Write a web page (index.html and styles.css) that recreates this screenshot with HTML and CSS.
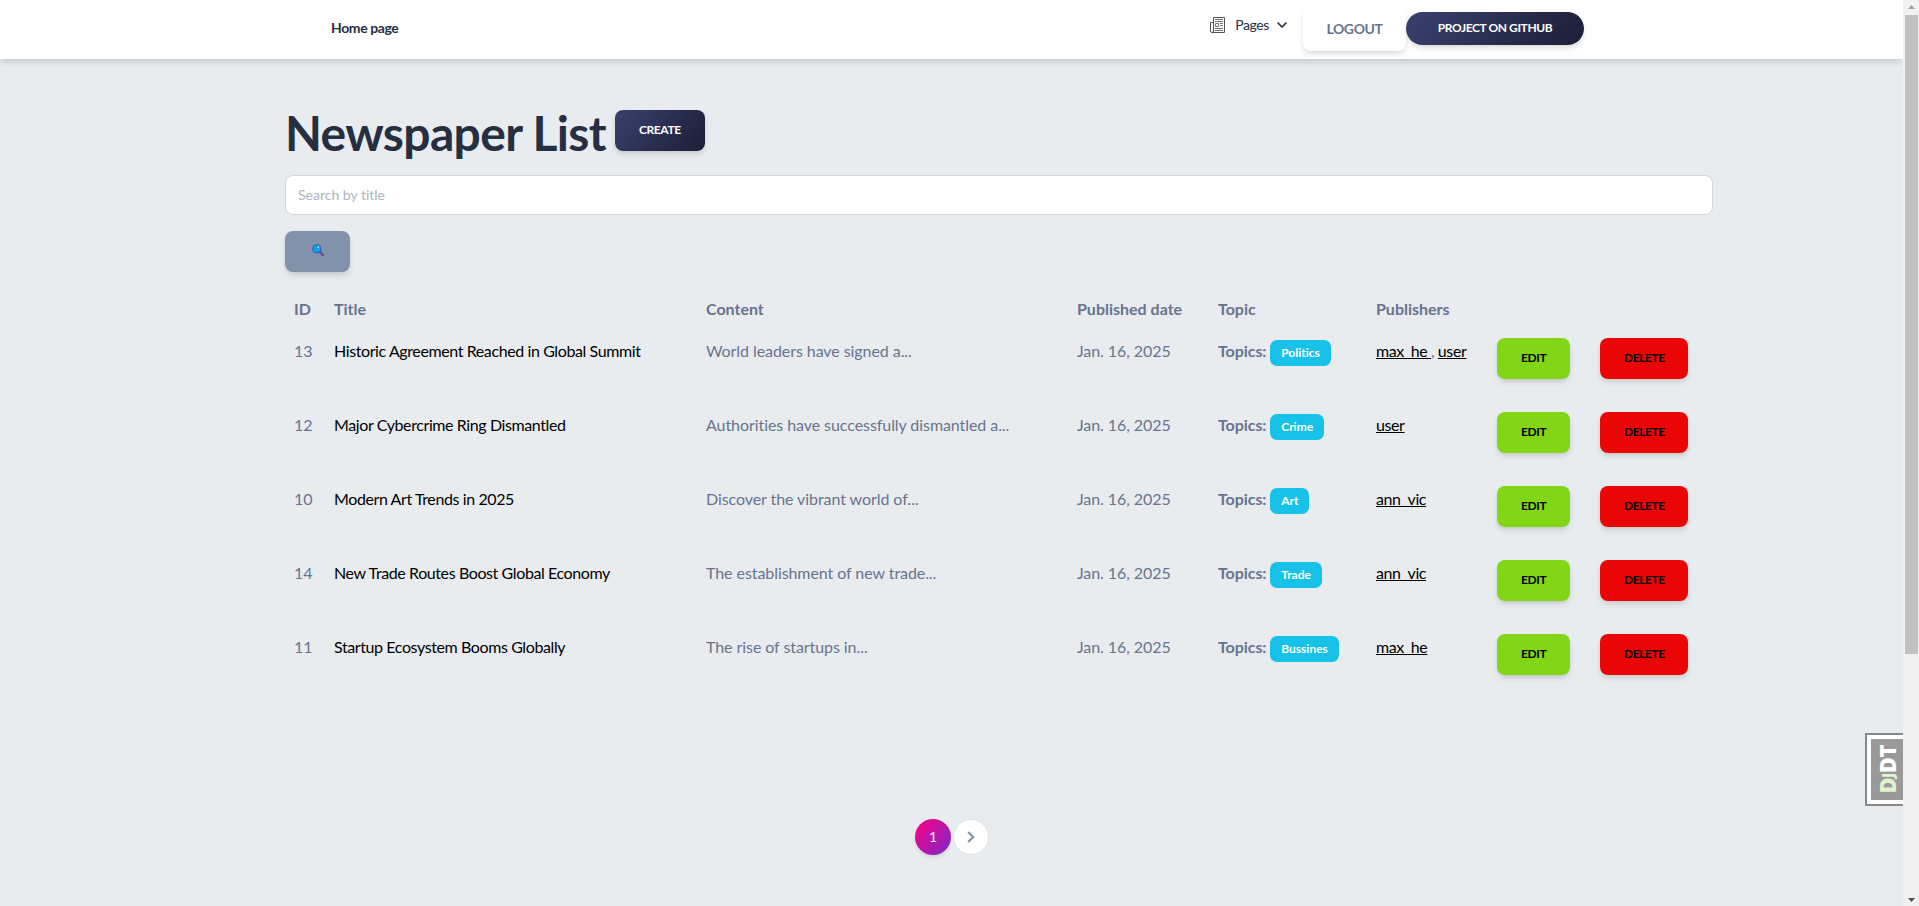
FILE: index.html
```html
<!DOCTYPE html>
<html lang="en">
<head>
<meta charset="utf-8">
<title>Newspaper List</title>
<link rel="stylesheet" href="styles.css">
</head>
<body>
<div class="page">
  <nav class="navbar">
    <a class="brand">Home page</a>
    <div class="nav-right">
      <a class="pages">
        <svg class="news-icon" width="16" height="18" viewBox="0 0 16 18" fill="none" stroke="#555" stroke-width="1"><path d="M3.500 1.500h11v15h-12.500a1.500 1.500 0 0 1-1.500-1.500v-8.500h3M3.500 1.500v13.500a1.500 1.500 0 0 1-1.500 1.500"/><path d="M5 3.500h8M5 5.500h8M5.500 7.500h3v3h-3zM10 7.500h3M10 9.500h3M5 12.500h8M5 14.500h8" stroke="#777"/></svg>
        <span>Pages</span>
        <svg class="chevron" width="10" height="6" viewBox="0 0 10 6" fill="none" stroke="#252f40" stroke-width="1.700" stroke-linecap="round" stroke-linejoin="round"><path d="M1 1l4 4 4-4"/></svg>
      </a>
      <a class="logout">LOGOUT</a>
      <a class="btn btn-dark btn-round">PROJECT ON GITHUB</a>
    </div>
  </nav>
  <main class="content">
    <h1>Newspaper List <a class="btn btn-dark">CREATE</a></h1>
    <input class="search" type="text" placeholder="Search by title">
    <button class="btn btn-search" aria-label="Search"><svg width="12" height="12" viewBox="0 0 12 12"><path d="M8 8l3 3" stroke="#6a4fa0" stroke-width="2.600" stroke-linecap="round"/><circle cx="4.800" cy="4.800" r="4.100" fill="#00a6f4" stroke="#3560a8" stroke-width="1.100"/><circle cx="6.300" cy="3.100" r=".8" fill="#d5f2ff"/></svg></button>
    <table class="table">
      <colgroup><col class="c-id"><col class="c-title"><col class="c-content"><col class="c-date"><col class="c-topic"><col class="c-pub"><col class="c-edit"><col></colgroup>
      <thead><tr><th>ID</th><th>Title</th><th>Content</th><th>Published date</th><th>Topic</th><th>Publishers</th><th></th><th></th></tr></thead>
      <tbody>
        <tr><td>13</td><td><a>Historic Agreement Reached in Global Summit</a></td><td>World leaders have signed a...</td><td>Jan. 16, 2025</td><td><b>Topics:</b> <span class="badge">Politics</span></td><td><a class="user">max_he </a>, <a class="user">user</a></td><td><a class="btn btn-edit">EDIT</a></td><td><a class="btn btn-delete">DELETE</a></td></tr>
        <tr><td>12</td><td><a>Major Cybercrime Ring Dismantled</a></td><td>Authorities have successfully dismantled a...</td><td>Jan. 16, 2025</td><td><b>Topics:</b> <span class="badge">Crime</span></td><td><a class="user">user</a></td><td><a class="btn btn-edit">EDIT</a></td><td><a class="btn btn-delete">DELETE</a></td></tr>
        <tr><td>10</td><td><a>Modern Art Trends in 2025</a></td><td>Discover the vibrant world of...</td><td>Jan. 16, 2025</td><td><b>Topics:</b> <span class="badge">Art</span></td><td><a class="user">ann_vic</a></td><td><a class="btn btn-edit">EDIT</a></td><td><a class="btn btn-delete">DELETE</a></td></tr>
        <tr><td>14</td><td><a>New Trade Routes Boost Global Economy</a></td><td>The establishment of new trade...</td><td>Jan. 16, 2025</td><td><b>Topics:</b> <span class="badge">Trade</span></td><td><a class="user">ann_vic</a></td><td><a class="btn btn-edit">EDIT</a></td><td><a class="btn btn-delete">DELETE</a></td></tr>
        <tr><td>11</td><td><a>Startup Ecosystem Booms Globally</a></td><td>The rise of startups in...</td><td>Jan. 16, 2025</td><td><b>Topics:</b> <span class="badge">Bussines</span></td><td><a class="user">max_he</a></td><td><a class="btn btn-edit">EDIT</a></td><td><a class="btn btn-delete">DELETE</a></td></tr>
      </tbody>
    </table>
  </main>
  <div class="pagination">
    <a class="page-link active">1</a>
    <a class="page-link next"><svg width="8" height="12" viewBox="0 0 8 12" fill="none" stroke="#8392ab" stroke-width="2.200"><path d="M1.200 1l5 5-5 5"/></svg></a>
  </div>
  <div class="toolbar-handle"><div class="handle-face"><span class="handle-text"><i>D<small>J</small></i>DT</span></div></div>
</div>
<div class="scrollbar">
  <svg width="16" height="15" viewBox="0 0 16 15"><path d="M5 9h7L8.500 5z" fill="#a3a3a3"/></svg>
  <div class="thumb"></div>
  <svg class="down" width="16" height="17" viewBox="0 0 16 17"><path d="M5 9h7l-3.500 4z" fill="#505050"/></svg>
</div>
</body>
</html>
```
FILE: styles.css
```css
* { box-sizing: border-box; }
body {
  margin: 0;
  display: flex;
  height: 906px;
  overflow: hidden;
  background: #e8ecef;
  color: #67748e;
  font: 400 16px/1.6 Lato, sans-serif;
  font-variant-ligatures: none;
}
.page { position: relative; width: 1903px; height: 906px; overflow: hidden; }
.navbar {
  display: flex;
  justify-content: space-between;
  height: 59px;
  padding: 0 319px 0 331px;
  background: #fff;
  box-shadow: 0 4px 6px -1px rgba(20,20,20,.1), 0 2px 10px -1px rgba(20,20,20,.08);
}
.brand {
  padding-top: 17px;
  color: #252f40;
  font-size: 14px;
  font-weight: 700;
  letter-spacing: -.4px;
}
.nav-right { display: flex; align-items: flex-start; }
.pages {
  display: flex;
  align-items: center;
  margin: 14px 16px 0 0;
  color: #252f40;
  font-size: 14px;
  letter-spacing: -.4px;
}
.news-icon { margin-right: 9px; }
.chevron { margin-left: 8px; }
.logout {
  width: 103px;
  height: 45px;
  margin-top: 6px;
  border-radius: 8px;
  box-shadow: 0 4px 7px -1px rgba(0,0,0,.11), 0 2px 4px -1px rgba(0,0,0,.07);
  font-size: 14px;
  font-weight: 700;
  letter-spacing: -.4px;
  line-height: 45px;
  text-align: center;
}
.btn {
  display: inline-block;
  padding: 11px 24px 13px;
  border: 0;
  border-radius: 8px;
  box-shadow: 0 4px 7px -1px rgba(0,0,0,.11), 0 2px 4px -1px rgba(0,0,0,.07);
  font: 700 12px/17px Lato, sans-serif;
  letter-spacing: -.4px;
  text-align: center;
}
.btn-dark { color: #fff; background: linear-gradient(310deg, #1b1e35, #3a416f); }
.btn-round { width: 178px; margin-top: 12px; padding: 7px 0 9px; border-radius: 30px; }
.content { padding: 44px 190px 0 285px; }
h1 {
  display: flex;
  gap: 9px;
  margin: 0 0 12px;
  color: #252f40;
  font-size: 48px;
  font-weight: 700;
  line-height: 60px;
  letter-spacing: -.65px;
}
h1 .btn { height: 41px; margin-top: 7px; }
.search {
  display: block;
  width: 100%;
  height: 40px;
  padding: 8px 12px 10px;
  border: 1px solid #d2d6da;
  border-radius: 8px;
  background: #fff;
  font: 400 14px/20px Lato, sans-serif;
  font-variant-ligatures: none;
}
.search::placeholder { color: #adb5bd; opacity: 1; }
.btn-search { display: block; width: 65px; height: 41px; margin: 16px 0; padding: 0; background: #8392ab; }
.table { width: 100%; border-collapse: collapse; table-layout: fixed; }
.c-id { width: 40px; }
.c-title { width: 372px; }
.c-content { width: 371px; }
.c-date { width: 141px; }
.c-topic { width: 158px; }
.c-pub { width: 121px; }
.c-edit { width: 103px; }
th, td { padding: 8px 7px 8px 9px; text-align: left; vertical-align: top; white-space: nowrap; }
th { height: 42px; font-weight: 700; }
td { height: 74px; letter-spacing: -.07px; }
td a { color: #000; letter-spacing: -.4px; }
.user { text-decoration: underline; white-space: pre; }
td:nth-child(6) { letter-spacing: -.5px; }
.badge {
  display: inline-block;
  padding: 6.6px 10.800px;
  border-radius: 7px;
  background: #17c1e8;
  color: #fff;
  font-size: 12px;
  font-weight: 700;
  letter-spacing: 0;
  line-height: 12px;
  vertical-align: baseline;
}
td .btn-edit { width: 73px; background: #82d616; }
td .btn-delete { width: 88px; background: #ea0606; }
.pagination { display: flex; gap: 2px; align-items: center; margin: 119px 0 0 915px; }
.page-link {
  display: flex;
  align-items: center;
  justify-content: center;
  width: 36px;
  height: 36px;
  border-radius: 50%;
  font-size: 14px;
}
.active {
  color: #fff;
  background: linear-gradient(310deg, #7928ca, #ff0080);
  box-shadow: 0 3px 5px -1px rgba(0,0,0,.09), 0 2px 3px -1px rgba(0,0,0,.07);
}
.next { width: 36px; height: 36px; background: #fff; border: 1px solid #dee2e6; }
.toolbar-handle {
  position: absolute;
  right: 0;
  top: 733px;
  width: 38px;
  height: 73px;
  padding: 4px 0 4px 4px;
  border: 2px solid #858789;
  border-right: 0;
  background: #fff;
}
.handle-face {
  display: flex;
  align-items: center;
  justify-content: center;
  height: 61px;
  background: #999;
}
.handle-text {
  writing-mode: vertical-rl;
  transform: rotate(180deg);
  color: #fff;
  font: 800 22px/32px "Open Sans", sans-serif;
  letter-spacing: -.5px;
}
.handle-text i { color: #dff5cd; font-style: normal; }
.handle-text small { font-size: 15px; }
.scrollbar { display: flex; flex-direction: column; width: 16px; background: #f1f1f1; }
.thumb { width: 13px; height: 639px; margin-left: 2px; background: #c1c1c1; }
.down { margin-top: auto; }
```
